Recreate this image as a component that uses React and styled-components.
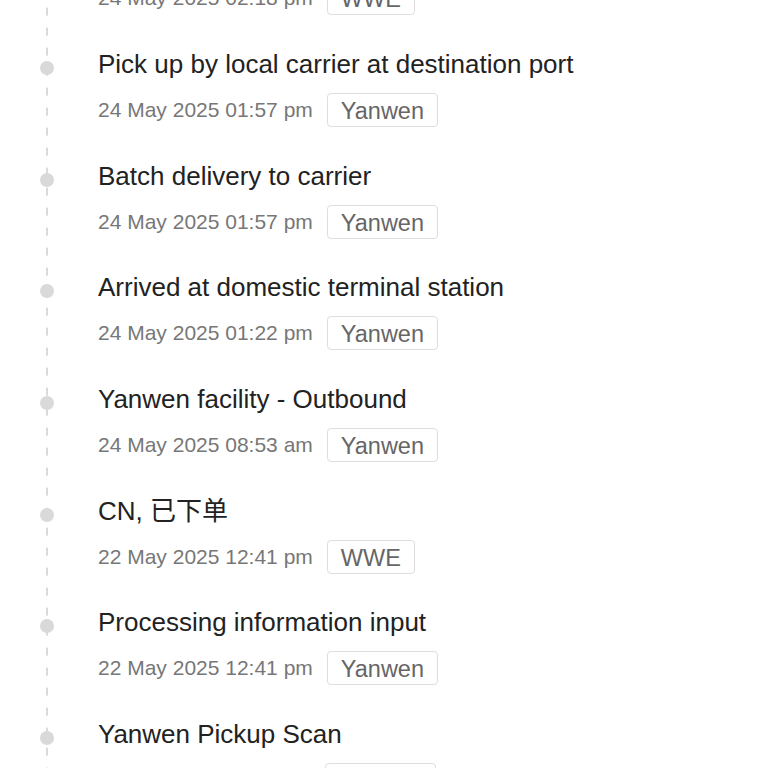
import React from 'react';
import styled, { createGlobalStyle } from 'styled-components';

const GlobalStyle = createGlobalStyle`
    html, body {
        margin: 0;
        padding: 0;
        background: #fff;
        overflow: hidden;
    }
    body {
        font-family: "Liberation Sans", Arial, "Noto Sans CJK SC", sans-serif;
    }
`;

const Page = styled.div`
    width: 768px;
    height: 768px;
    overflow: hidden;
    background: #fff;
`;

// dashed rail drawn as a repeating background so it stays in flow
const Timeline = styled.ul`
    list-style: none;
    margin: -64.7px 0 0 0;
    padding: 0;
    background-image: linear-gradient(to bottom, #dadada 0, #dadada 8px, transparent 8px);
    background-size: 2px 20px;
    background-repeat: repeat-y;
    background-position: 46px 12.7px;
`;

const Item = styled.li`
    display: grid;
    grid-template-columns: 98px 1fr;
    height: 111.67px;
    box-sizing: border-box;
`;

const Marker = styled.div`
    padding: 14px 0 0 40px;
`;

const Dot = styled.span`
    display: block;
    width: 14px;
    height: 14px;
    border-radius: 50%;
    background: #d9d9d9;
`;

const Body = styled.div`
    display: flex;
    flex-direction: column;
    gap: 12px;
`;

const Title = styled.div`
    font-size: 26px;
    line-height: 34px;
    color: #222;
    white-space: nowrap;
`;

const Meta = styled.div`
    display: flex;
    align-items: center;
    gap: 14px;
`;

const Time = styled.span`
    font-size: 21px;
    color: #777;
    white-space: nowrap;
`;

const Carrier = styled.span`
    display: inline-block;
    box-sizing: border-box;
    height: 34px;
    line-height: 30px;
    padding: 2px 13px 0;
    border: 1px solid #dedede;
    border-radius: 4px;
    font-size: 23.5px;
    color: #666;
    background: #fff;
`;

const events = [
    { title: 'Departed from origin port', time: '24 May 2025 02:18 pm', carrier: 'WWE' },
    { title: 'Pick up by local carrier at destination port', time: '24 May 2025 01:57 pm', carrier: 'Yanwen' },
    { title: 'Batch delivery to carrier', time: '24 May 2025 01:57 pm', carrier: 'Yanwen' },
    { title: 'Arrived at domestic terminal station', time: '24 May 2025 01:22 pm', carrier: 'Yanwen' },
    { title: 'Yanwen facility - Outbound', time: '24 May 2025 08:53 am', carrier: 'Yanwen' },
    { title: 'CN, 已下单', time: '22 May 2025 12:41 pm', carrier: 'WWE' },
    { title: 'Processing information input', time: '22 May 2025 12:41 pm', carrier: 'Yanwen' },
    { title: 'Yanwen Pickup Scan', time: '22 May 2025 11:52 am', carrier: 'Yanwen' },
];

const App = () => (
    <Page>
        <GlobalStyle />
        <Timeline>
            {events.map((ev, i) => (
                <Item key={i}>
                    <Marker>
                        <Dot />
                    </Marker>
                    <Body>
                        <Title>{ev.title}</Title>
                        <Meta>
                            <Time>{ev.time}</Time>
                            <Carrier>{ev.carrier}</Carrier>
                        </Meta>
                    </Body>
                </Item>
            ))}
        </Timeline>
    </Page>
);

export default App;
